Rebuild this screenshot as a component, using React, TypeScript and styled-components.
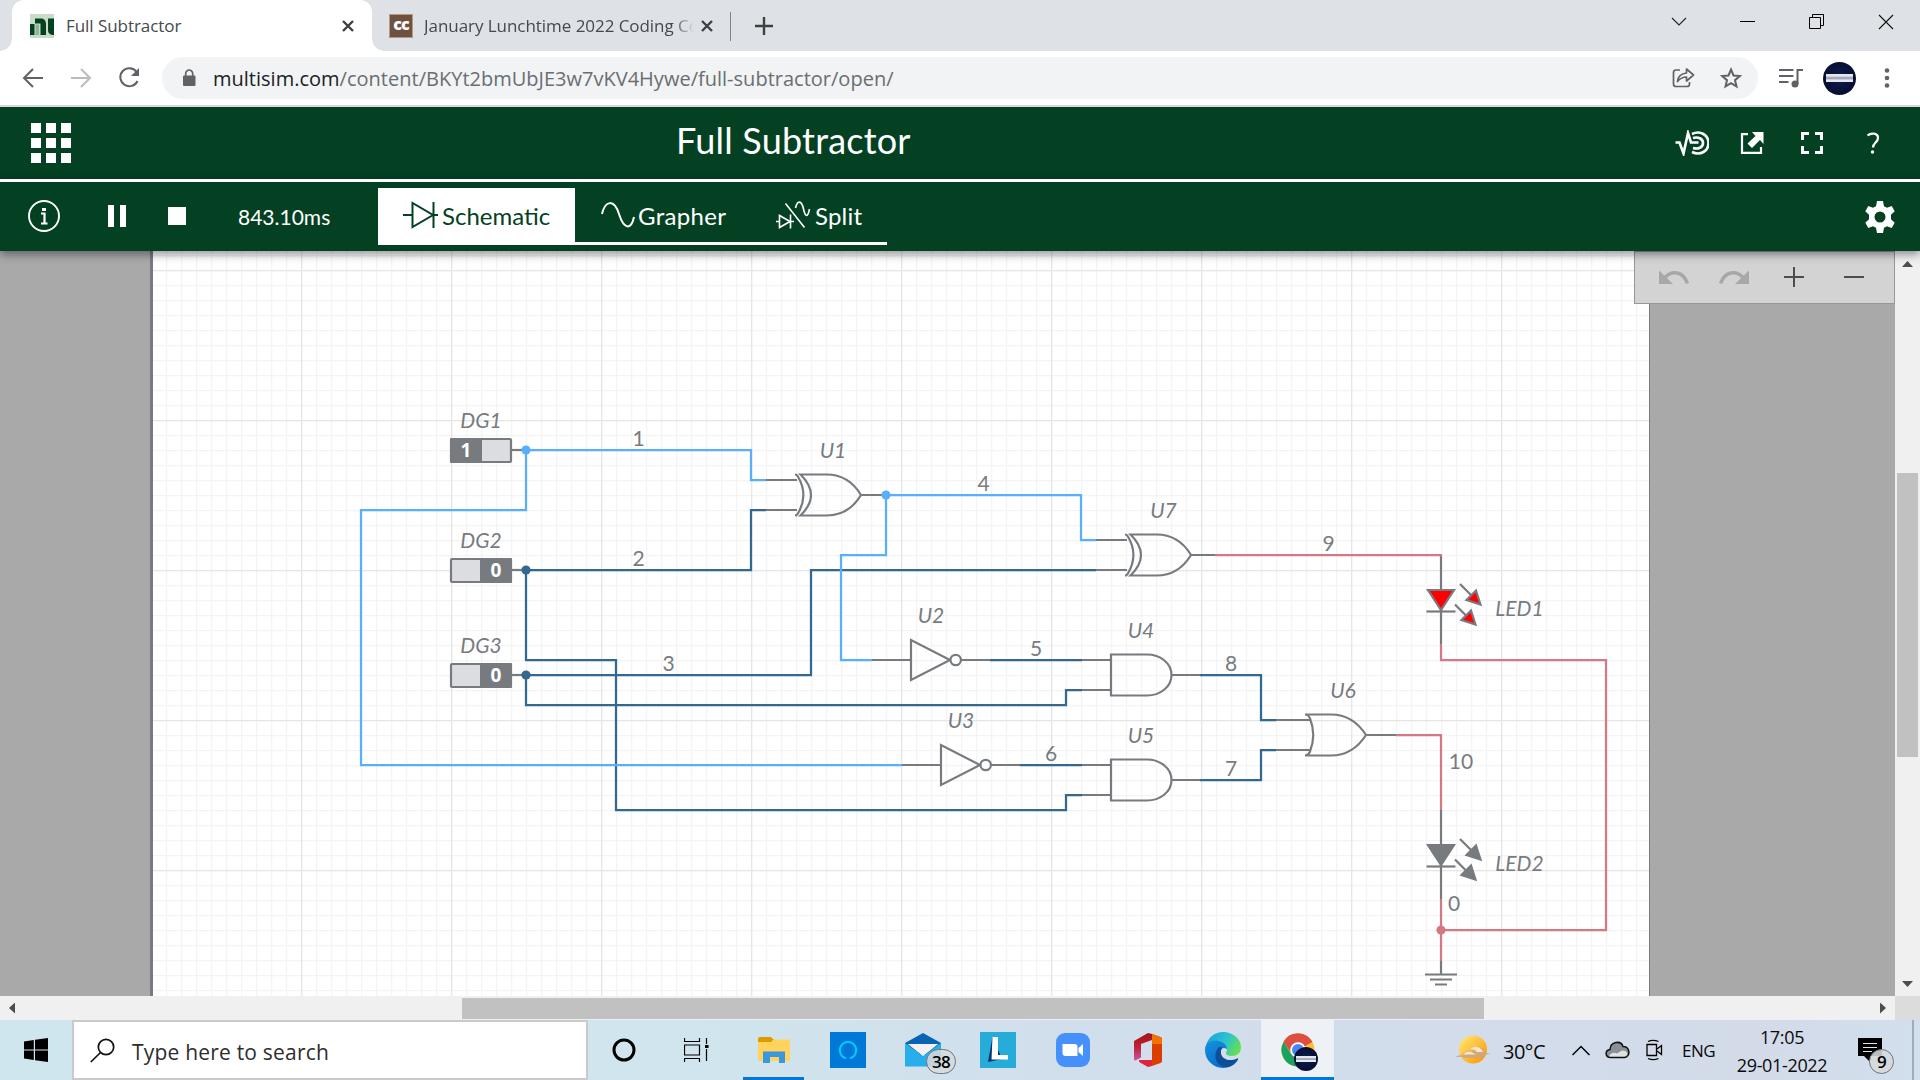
import React from "react";
import styled, { createGlobalStyle, css } from "styled-components";

const UI = `"Open Sans", "Noto Sans", sans-serif`;
const LATO = `Lato, "Open Sans", sans-serif`;
const GREEN = "#044123";
const INK = "#777b80";
const HIGH = "#58b0fc";
const LOW = "#34688f";
const RED = "#d47884";

const Global = createGlobalStyle`
  html, body { margin: 0; padding: 0; overflow: hidden; background: #fff; }
  *, *::before, *::after { box-sizing: border-box; }
  svg { display: block; flex: none; }
`;

const Screen = styled.div`
  width: 1920px;
  height: 1080px;
  display: flex;
  flex-direction: column;
  overflow: hidden;
  font-family: ${UI};
`;

/* ---------- browser chrome ---------- */

const TabStrip = styled.div`
  display: flex;
  height: 51px;
  flex: none;
  background: #dee1e6;
  padding-left: 12px;
`;

const Tab = styled.div<{ $active?: boolean; $width: number; $padLeft: number; $padRight: number }>`
  position: relative;
  display: flex;
  align-items: center;
  width: ${(p) => p.$width}px;
  height: 51px;
  padding: 0 ${(p) => p.$padRight}px 0 ${(p) => p.$padLeft}px;
  ${(p) =>
    p.$active &&
    css`
      background: #fff;
      border-radius: 12px 12px 0 0;
      &::before,
      &::after {
        content: "";
        position: absolute;
        bottom: 0;
        width: 12px;
        height: 12px;
      }
      &::before {
        left: -12px;
        background: radial-gradient(circle at 0 0, transparent 11.5px, #fff 12px);
      }
      &::after {
        right: -12px;
        background: radial-gradient(circle at 100% 0, transparent 11.5px, #fff 12px);
      }
    `}
`;

const TabTitle = styled.span<{ $fade?: boolean }>`
  flex: 1;
  margin-left: 12px;
  overflow: hidden;
  white-space: nowrap;
  font-size: 17px;
  line-height: 26px;
  letter-spacing: -0.05px;
  color: #45494d;
  ${(p) =>
    p.$fade &&
    css`
      margin-left: 11px;
      mask-image: linear-gradient(to right, #000 90%, transparent 97.5%);
    `}
`;

const CcIcon = styled.span`
  width: 24px;
  height: 24px;
  flex: none;
  background: #6f5140;
  border: 1px solid #b39a86;
  color: #fff;
  font: 800 16px/19px ${UI};
  letter-spacing: -0.8px;
  text-align: center;
`;

const TabDivider = styled.span`
  width: 1px;
  height: 29px;
  margin: 12px 24px 0 8px;
  background: #808489;
`;

const NewTab = styled.span`
  display: flex;
  align-items: center;
`;

const WindowButtons = styled.div`
  display: flex;
  margin-left: auto;
  height: 43px;
`;

const WindowButton = styled.span`
  width: 69px;
  display: flex;
  align-items: center;
  justify-content: center;
`;

const AddressBar = styled.div`
  display: flex;
  align-items: center;
  height: 56px;
  flex: none;
  background: #fff;
  border-bottom: 2px solid #d9dadb;
  padding-left: 21px;
`;

const NavIcons = styled.div`
  display: flex;
  gap: 24px;
  width: 141px;
`;

const UrlPill = styled.div`
  display: flex;
  align-items: center;
  width: 1596px;
  height: 42px;
  border-radius: 21px;
  background: #f1f3f4;
  padding: 0 15px 0 20px;
`;

const Url = styled.span`
  margin: 1px 0 0 17px;
  font-size: 20px;
  letter-spacing: 0.01px;
  line-height: 30px;
  color: #6a6e72;
  b {
    font-weight: 400;
    color: #202124;
  }
`;

const PillActions = styled.div`
  display: flex;
  align-items: center;
  gap: 24px;
  margin-left: auto;
`;

const BarActions = styled.div`
  display: flex;
  align-items: center;
  padding-left: 21px;
`;

const Avatar = styled.span<{ $size: number }>`
  display: flex;
  align-items: center;
  justify-content: center;
  width: ${(p) => p.$size}px;
  height: ${(p) => p.$size}px;
  border-radius: 50%;
  background: radial-gradient(circle, #0c1f52 0%, #071039 55%, #060b28 100%);
  &::after {
    content: "";
    width: 82%;
    height: 24%;
    background: linear-gradient(#e4e6ee 25%, #a3a7b8 45%, #a3a7b8 60%, #e8eaf2 75%);
  }
`;

const ProfileButton = styled.span`
  margin: 0 28px 0 19px;
`;

/* ---------- application header ---------- */

const AppHeader = styled.header`
  display: flex;
  align-items: center;
  justify-content: space-between;
  height: 72px;
  flex: none;
  padding: 0 40px 0 31px;
  background: ${GREEN};
  color: #fff;
`;

const AppsGrid = styled.div`
  display: grid;
  grid-template-columns: repeat(3, 10px);
  gap: 5px;
  width: 270px;
  i {
    height: 10px;
    background: #fff;
  }
`;

const Title = styled.h1`
  margin: 0 auto 6px 375px;
  font: 400 36px/44px ${LATO};
  letter-spacing: 0.2px;
`;

const HeaderActions = styled.div`
  display: flex;
  align-items: center;
`;

const HeaderAction = styled.span`
  width: 60px;
  display: flex;
  justify-content: center;
  &:last-child {
    width: 14px;
    margin-left: 24px;
  }
`;

const SimBar = styled.div`
  position: relative;
  z-index: 2;
  display: flex;
  height: 72px;
  flex: none;
  border-top: 3px solid #fff;
  background: ${GREEN};
  color: #fff;
  box-shadow: 0 3px 9px rgba(0, 0, 0, 0.45);
  padding: 0 25px 0 28px;
`;

const Transport = styled.div`
  display: flex;
  align-items: center;
  width: 350px;
  padding-bottom: 1px;
`;

const Pause = styled.span`
  width: 18px;
  height: 22px;
  margin-left: 48px;
  border: solid #fff;
  border-width: 0 6px;
`;

const Stop = styled.span`
  width: 18px;
  height: 18px;
  margin-left: 42px;
  background: #fff;
`;

const Elapsed = styled.span`
  margin: 2px 0 0 52px;
  font: 400 21px/30px ${LATO};
`;

const Views = styled.div`
  display: flex;
  height: 57px;
  margin-top: 6px;
`;

const View = styled.div<{ $active?: boolean; $width: number; $pad: number; $spacing?: number }>`
  display: flex;
  align-items: center;
  width: ${(p) => p.$width}px;
  padding: 0 0 0 ${(p) => p.$pad}px;
  font: 400 24px/30px ${LATO};
  letter-spacing: ${(p) => p.$spacing ?? 0}px;
  white-space: nowrap;
  background: ${(p) => (p.$active ? "#fff" : "transparent")};
  color: ${(p) => (p.$active ? GREEN : "#fff")};
  border-bottom: 3px solid #fff;
  span {
    margin-top: 2px;
  }
`;

const Settings = styled.span`
  display: flex;
  align-items: center;
  margin-left: auto;
`;

/* ---------- workspace ---------- */

const Workspace = styled.main`
  display: flex;
  height: 745px;
  flex: none;
`;

const Canvas = styled.div`
  position: relative;
  display: flex;
  width: 1895px;
  padding-left: 150px;
  background: #a9a9a9;
`;

const Sheet = styled.div`
  width: 1500px;
  background: #fff;
  border-left: 3px solid #777a80;
  border-right: 1px solid #777a80;
  overflow: hidden;
`;

const EditTools = styled.div`
  position: absolute;
  top: 0;
  right: 0;
  display: flex;
  align-items: center;
  width: 261px;
  height: 53px;
  padding: 0 0 2px 9px;
  background: #d3d3d3;
  border: 1px solid #979797;
`;

const EditTool = styled.span`
  width: 60px;
  display: flex;
  justify-content: center;
`;

const VScroll = styled.div`
  display: flex;
  flex-direction: column;
  align-items: center;
  justify-content: space-between;
  width: 25px;
  padding: 10px 0 9px;
  background: #f0f0f0;
`;

const VThumb = styled.div`
  width: 21px;
  height: 284px;
  margin-bottom: 18px;
  background: #c1c1c1;
`;

const HScroll = styled.div`
  display: flex;
  align-items: center;
  justify-content: space-between;
  height: 24px;
  flex: none;
  padding: 0 34px 0 9px;
  background: linear-gradient(to right, #f0f0f0 1895px, #dcdcdc 1895px);
`;

const HThumb = styled.div`
  width: 1022px;
  height: 21px;
  margin-left: 50px;
  background: #c1c1c1;
`;

const Arrow = styled.span<{ $dir: "up" | "down" | "left" | "right" }>`
  width: ${(p) => (p.$dir === "up" || p.$dir === "down" ? 11 : 6)}px;
  height: ${(p) => (p.$dir === "up" || p.$dir === "down" ? 6 : 11)}px;
  background: #4d4d4d;
  clip-path: ${(p) =>
    ({
      up: "polygon(50% 0, 100% 100%, 0 100%)",
      down: "polygon(0 0, 100% 0, 50% 100%)",
      left: "polygon(100% 0, 100% 100%, 0 50%)",
      right: "polygon(0 0, 100% 50%, 0 100%)",
    })[p.$dir]};
`;

/* ---------- taskbar ---------- */

const Taskbar = styled.footer`
  display: flex;
  height: 60px;
  flex: none;
  background: linear-gradient(to right, #cfe6ee 0%, #d0e5ed 36%, #d1dfec 55%, #d2dcea 75%, #d3dbe9 92%, #d2dfec 100%);
`;

const Start = styled.div`
  width: 72px;
  display: flex;
  align-items: center;
  justify-content: center;
`;

const SearchBox = styled.div`
  display: flex;
  align-items: center;
  width: 516px;
  border: 2px solid #cacaca;
  background: #fff;
  padding-left: 16px;
  color: #2d2d2d;
  font-size: 21px;
  letter-spacing: 0.2px;
  span {
    margin: 3px 0 0 17px;
  }
`;

const TaskCell = styled.div<{ $width?: number; $nudge?: number; $open?: boolean; $focus?: boolean }>`
  position: relative;
  width: ${(p) => p.$width ?? 75}px;
  display: flex;
  align-items: center;
  justify-content: center;
  padding-right: ${(p) => p.$nudge ?? 0}px;
  background: ${(p) => (p.$focus ? "#eef2f7" : "transparent")};
  &::after {
    content: "";
    position: absolute;
    bottom: 0;
    left: ${(p) => (p.$focus ? 0 : 7)}px;
    right: ${(p) => (p.$focus ? 0 : 7)}px;
    height: ${(p) => (p.$open || p.$focus ? 3 : 0)}px;
    background: #0078d7;
  }
`;

const Badge = styled.span<{ $width: number; $right: number; $bottom: number }>`
  position: absolute;
  right: ${(p) => p.$right}px;
  bottom: ${(p) => p.$bottom}px;
  width: ${(p) => p.$width}px;
  height: 25px;
  border-radius: 13px;
  border: 1px solid #70757a;
  background: rgba(214, 217, 220, 0.88);
  color: #000;
  font: 600 17px/23px ${UI};
  letter-spacing: -0.6px;
  text-align: center;
`;

const AvatarBadge = styled.span`
  position: absolute;
  left: 33px;
  top: 27px;
`;

const Tray = styled.div`
  display: flex;
  align-items: center;
  margin-left: auto;
  color: #0a0a0a;
  font-size: 19px;
`;

const Temperature = styled.span`
  width: 45px;
  margin: 3px 24px 0 13px;
  white-space: nowrap;
  font-size: 20px;
  letter-spacing: -0.5px;
`;

const Language = styled.span`
  width: 35px;
  margin: 0 0 0 19px;
  font-size: 17px;
  letter-spacing: -0.5px;
`;

const Clock = styled.div`
  display: flex;
  flex-direction: column;
  align-items: center;
  width: 98px;
  margin: 1px 0 0 16px;
  white-space: nowrap;
  font-size: 18px;
  line-height: 28px;
  letter-spacing: -0.35px;
`;

const Notifications = styled.div`
  position: relative;
  width: 54px;
  height: 60px;
  margin-left: 27px;
  padding-top: 18px;
`;

const ShowDesktop = styled.div`
  width: 8px;
  height: 60px;
  border-left: 2px solid #a4abb8;
`;

const CloudIcon = styled.svg`
  margin: 0 16px 0 15px;
`;

/* ---------- schematic primitives ---------- */

const Drawing = styled.svg`
  fill: none;
  stroke: ${INK};
  stroke-width: 2.2;
`;

const NetLabel = styled.text`
  fill: ${INK};
  stroke: none;
  font: 400 21px ${LATO};
  text-anchor: middle;
`;

const PartLabel = styled(NetLabel)`
  font-style: italic;
`;

const SwitchDigit = styled(NetLabel)`
  fill: #fff;
  font: 700 19px ${UI};
`;

const Wire = ({ d, color }: { d: string; color: string }) => <path d={d} stroke={color} strokeWidth={2.25} />;

const Dot = ({ x, y, color }: { x: number; y: number; color: string }) => (
  <circle cx={x} cy={y} r={4.6} fill={color} stroke="none" />
);

const XorGate = ({ x, y }: { x: number; y: number }) => (
  <g transform={`translate(${x} ${y})`}>
    <path d="M-95-15h31M-95 15h31M0 0h25" />
    <path d="M-66-20.500c1.500 0 2.500 1 3.200 2.500q10.400 18 0 36c-.7 1.500-1.700 2.500-3.200 2.500" />
    <path d="M-60.500-20.500q21 20.500 0 41h26c15 0 27-8 34.500-20.500c-7.500-12.500-19.500-20.500-34.500-20.500z" />
  </g>
);

const OrGate = ({ x, y }: { x: number; y: number }) => (
  <g transform={`translate(${x} ${y})`}>
    <path d="M-90-15h34M-90 15h34M0 0h30" />
    <path d="M-61-20.500h26c15 0 27 8 35 20.500c-8 12.500-20 20.500-35 20.500h-26c2.500 0 4-1.500 5-4q6.500-16.500 0-33c-1-2.500-2.500-4-5-4" />
  </g>
);

const AndGate = ({ y }: { y: number }) => (
  <g transform={`translate(1111 ${y})`}>
    <path d="M-30-15h30M-30 15h30M60.500 0h29.500" />
    <path d="M0-20.500h36c13 0 24.500 8.500 24.500 20.500s-11.500 20.500-24.500 20.500h-36z" />
  </g>
);

const Inverter = ({ x, y }: { x: number; y: number }) => (
  <g transform={`translate(${x} ${y})`}>
    <path d="M-40 0h40M50 0h30" />
    <path d="M0-20v40l39-20z" />
    <circle cx="44.700" cy="0" r="5.200" fill="#fff" />
  </g>
);

const Led = ({ y, lit }: { y: number; lit: string }) => (
  <g transform={`translate(1441 ${y})`}>
    <path d="M0-35v89" />
    <path d="M-13 0h26l-13 20z" fill={lit} />
    <path d="M-14.500 21.500h29" />
    <path d="M19-6l11 11M14 14.500l11 11" />
    <path d="M35 0.500l4.500 14l-14-4.500z" fill={lit} />
    <path d="M30 20.500l4.500 14l-14-4.500z" fill={lit} />
  </g>
);

const DigitalSwitch = ({ y, value, name }: { y: number; value: 0 | 1; name: string }) => (
  <g>
    <path d={`M512 ${y}h14`} />
    <rect x="451" y={y - 11} width="60" height="23" rx="1" fill="#dcdde0" />
    <rect x={value ? 450 : 480} y={y - 12} width="32" height="25" rx="1" fill={INK} stroke="none" />
    <SwitchDigit x={value ? 466 : 496} y={y + 7}>
      {value}
    </SwitchDigit>
    <PartLabel x="481" y={y - 22.500}>
      {name}
    </PartLabel>
  </g>
);

const nets = [
  { n: "1", x: 638.5, y: 446 },
  { n: "2", x: 638.5, y: 566 },
  { n: "3", x: 668.5, y: 671 },
  { n: "4", x: 983.5, y: 491 },
  { n: "5", x: 1036, y: 656 },
  { n: "6", x: 1051, y: 761 },
  { n: "7", x: 1231, y: 776 },
  { n: "8", x: 1231, y: 671 },
  { n: "9", x: 1328.5, y: 551 },
  { n: "10", x: 1461, y: 769 },
  { n: "0", x: 1454, y: 911 },
];

const parts = [
  { n: "U1", x: 833, y: 457.5 },
  { n: "U7", x: 1163.5, y: 517.5 },
  { n: "U2", x: 931, y: 622.5 },
  { n: "U3", x: 961, y: 727.5 },
  { n: "U4", x: 1141, y: 637.5 },
  { n: "U5", x: 1141, y: 742.5 },
  { n: "U6", x: 1343, y: 697.5 },
  { n: "LED1", x: 1519.5, y: 615.5 },
  { n: "LED2", x: 1519.5, y: 870.5 },
];

const Schematic = () => (
  <Drawing width="1496" height="745" viewBox="153 251 1496 745">
    <defs>
      <pattern id="minor" x="1" y="0" width="15" height="15" patternUnits="userSpaceOnUse">
        <path d="M.5 0v15M0 .5h15" stroke="#f4f4f4" strokeWidth="1.500" />
      </pattern>
      <pattern id="major" x="1" y="120" width="150" height="150" patternUnits="userSpaceOnUse">
        <path d="M.5 0v150M0 .5h150" stroke="#e6e6e6" strokeWidth="1.600" />
      </pattern>
    </defs>
    <rect x="153" y="251" width="1496" height="745" fill="url(#minor)" stroke="none" />
    <rect x="153" y="251" width="1496" height="745" fill="url(#major)" stroke="none" />

    <XorGate x={861} y={495} />
    <XorGate x={1191} y={555} />
    <AndGate y={675} />
    <AndGate y={780} />
    <OrGate x={1366} y={735} />
    <Inverter x={911} y={660} />
    <Inverter x={941} y={765} />
    <Led y={590} lit="#ff0000" />
    <Led y={845} lit={INK} />

    <Wire color={LOW} d="M526 570H751V510H766M526 570V660H616V810H1066V795H1082" />
    <Wire color={LOW} d="M526 675H811V570H1096M526 675V705H1066V690H1082" />
    <Wire color={LOW} d="M990 660H1082M1020 765H1082" />
    <Wire color={LOW} d="M1200 675H1261V720H1276M1200 780H1261V750H1276" />
    <Wire color={HIGH} d="M526 450H751V480H766M526 450V510H361V765H902" />
    <Wire color={HIGH} d="M886 495H1081V540H1096M886 495V555H841V660H872" />
    <Wire color={RED} d="M1215 555H1442M1441 644V660H1606V930H1441M1396 735H1441V810M1441 899V961" />

    <DigitalSwitch y={450} value={1} name="DG1" />
    <DigitalSwitch y={570} value={0} name="DG2" />
    <DigitalSwitch y={675} value={0} name="DG3" />
    <Dot x={526} y={450} color={HIGH} />
    <Dot x={526} y={570} color={LOW} />
    <Dot x={526} y={675} color={LOW} />
    <Dot x={886} y={495} color={HIGH} />
    <Dot x={1441} y={930} color={RED} />
    <path d="M1441 961v13.500M1425 974.500h32M1430 979.500h22M1435 984.500h12" />

    {nets.map((l) => (
      <NetLabel key={l.n} x={l.x} y={l.y}>
        {l.n}
      </NetLabel>
    ))}
    {parts.map((l) => (
      <PartLabel key={l.n} x={l.x} y={l.y}>
        {l.n}
      </PartLabel>
    ))}
  </Drawing>
);

/* ---------- icons ---------- */

const Cross = ({ size, w, color }: { size: number; w: number; color: string }) => (
  <svg width={size} height={size} viewBox={`0 0 ${size} ${size}`} stroke={color} strokeWidth={w}>
    <path d={`M1 1L${size - 1} ${size - 1}M${size - 1} 1L1 ${size - 1}`} />
  </svg>
);

const NiIcon = () => (
  <svg width="24" height="24" viewBox="0 0 24 24">
    <path fill="#c9dcc6" d="M0 0h24v24H0z" />
    <path fill="#044123" d="M0 10h4.500v11H0zM5 4.500h5.500c3.500 0 5.500 2 5.500 5.500v11h-5.500V9.500H5zM18 4.500h6V21c-4 0-6-1.500-6-5z" />
    <path fill="#8db398" d="M5.500 10.500h3.500v10.500H5.500z" />
  </svg>
);

const Gear = () => (
  <svg width="30" height="32" viewBox="0 0 30 32" fill="#fff" fillRule="evenodd">
    <path d="M12 0h6l1 5.200 3 1.600 4.700-1.800 3 5.200-3.700 3.600v4.400l3.700 3.600-3 5.200-4.700-1.800-3 1.600-1 5.200h-6l-1-5.200-3-1.600-4.700 1.800-3-5.200 3.700-3.600v-4.400L.3 10.200l3-5.200L8 6.800l3-1.600zM15 10.500a5.500 5.500 0 100 11 5.500 5.500 0 000-11z" />
  </svg>
);

const EditArrow = ({ flip }: { flip?: boolean }) => (
  <svg width="32" height="16" viewBox="0 0 32 16">
    <g transform={flip ? "matrix(-1 0 0 1 32 0)" : undefined}>
      <path d="M1 1.500v13.500h14z" fill="#a8a8a8" />
      <path d="M7 8.500C14 1 25 2 29.500 14.500" fill="none" stroke="#a8a8a8" strokeWidth="3.600" />
    </g>
  </svg>
);

const ChromeLogo = () => (
  <svg width="34" height="34" viewBox="0 0 34 34">
    <circle cx="17" cy="17" r="16.500" fill="#fbc02d" />
    <path d="M17 17L2.700 8.700A16.500 16.500 0 0131.300 9z" fill="#dd4f43" />
    <path d="M17 9h14.300A16.500 16.500 0 002.700 8.700L10 20z" fill="#dd4f43" />
    <path d="M2.700 8.700A16.500 16.500 0 0017 33.500L24 21l-14 0z" fill="#1ba261" />
    <circle cx="17" cy="17" r="7.800" fill="#fff" />
    <circle cx="17" cy="17" r="6" fill="#4687f4" />
  </svg>
);

const EdgeLogo = () => (
  <svg width="36" height="36" viewBox="0 0 36 36">
    <defs>
      <linearGradient id="edgeTop" x1="0" x2="1" y1="0.200" y2="0.600">
        <stop offset="0" stopColor="#1ba5dc" />
        <stop offset="0.550" stopColor="#2cc3d0" />
        <stop offset="1" stopColor="#66e14b" />
      </linearGradient>
      <linearGradient id="edgeLeft" x1="0" x2="0.500" y1="0" y2="1">
        <stop offset="0" stopColor="#1693dc" />
        <stop offset="1" stopColor="#0670cc" />
      </linearGradient>
    </defs>
    <path d="M1 14C3 5 10 0 18 0c10 0 18 7 18 15 0 6-4 9-9 9-4 0-6-1-6-3 0-1 1-2 1-4 0-5-6-8-12-8-4 0-7 2-9 5z" fill="url(#edgeTop)" />
    <path d="M0 18c0-6 4-9.500 10-9.500 7 0 12 4 12 8.500-5-3-9 1-9 6 0 6 4 11 9 12.500C10 38 0 29 0 18z" fill="url(#edgeLeft)" />
    <path d="M14 15c-6 6-5 19 8 20.500 5-1 9-4 11-8 .5-1-.5-1.500-1-1-7 3.500-15 1-16-5-.4-3 .5-5 2-6z" fill="#0c4f98" />
  </svg>
);

export default function App() {
  return (
    <Screen>
      <Global />
      <TabStrip>
        <Tab $active $width={360} $padLeft={18} $padRight={18}>
          <NiIcon />
          <TabTitle>Full Subtractor</TabTitle>
          <Cross size={12} w={2.4} color="#3c4043" />
        </Tab>
        <Tab $width={350} $padLeft={17} $padRight={9}>
          <CcIcon>cc</CcIcon>
          <TabTitle $fade>January Lunchtime 2022 Coding Contest</TabTitle>
          <Cross size={12} w={2.4} color="#3c4043" />
        </Tab>
        <TabDivider />
        <NewTab>
          <svg width="18" height="18" viewBox="0 0 18 18" stroke="#3c4043" strokeWidth="2.400">
            <path d="M9 0v18M0 9h18" />
          </svg>
        </NewTab>
        <WindowButtons>
          <WindowButton>
            <svg width="16" height="10" viewBox="0 0 16 10" fill="none" stroke="#222" strokeWidth="1.100">
              <path d="M1 1l7 7 7-7" />
            </svg>
          </WindowButton>
          <WindowButton>
            <svg width="15" height="1" viewBox="0 0 15 1">
              <path d="M0 0h15v1H0z" />
            </svg>
          </WindowButton>
          <WindowButton>
            <svg width="15" height="15" viewBox="0 0 15 15" fill="none" stroke="#000">
              <path d="M.5 3.500h11v11H.5zM3.500 3.500v-3h11v11h-3" />
            </svg>
          </WindowButton>
          <WindowButton>
            <Cross size={16} w={1.1} color="#111" />
          </WindowButton>
        </WindowButtons>
      </TabStrip>

      <AddressBar>
        <NavIcons>
          <svg width="24" height="24" viewBox="0 0 24 24" fill="none" stroke="#5f6368" strokeWidth="2">
            <path d="M22 12H4M12 3l-9 9 9 9" />
          </svg>
          <svg width="24" height="24" viewBox="0 0 24 24" fill="none" stroke="#b9bbbe" strokeWidth="2">
            <path d="M2 12h18M12 3l9 9-9 9" />
          </svg>
          <svg width="24" height="24" viewBox="0 0 24 24" fill="none" stroke="#5f6368" strokeWidth="2">
            <path d="M19.500 5.800A9 9 0 1020.500 15" />
            <path d="M22 2v8h-8z" fill="#5f6368" stroke="none" />
          </svg>
        </NavIcons>
        <UrlPill>
          <svg width="14" height="18" viewBox="0 0 14 18">
            <rect x="1" y="6.500" width="12.500" height="10.500" rx="1" fill="#5f6368" />
            <path d="M3.700 7V4.500a3.500 3.500 0 017 0V7" fill="none" stroke="#5f6368" strokeWidth="1.700" />
          </svg>
          <Url>
            <b>multisim.com</b>/content/BKYt2bmUbJE3w7vKV4Hywe/full-subtractor/open/
          </Url>
          <PillActions>
            <svg width="24" height="24" viewBox="0 0 24 24" fill="none" stroke="#5f6368" strokeWidth="1.700">
              <path d="M9 4H5C3.500 4 2.500 5 2.500 6.500V18c0 1.500 1 2.500 2.500 2.500h11c1.500 0 2.500-1 2.500-2.500v-2" />
              <path d="M6.500 15.500c.5-5 3.500-8 9-8.500V3L22.500 9l-7 6v-4c-4 0-6.500 1.500-9 4.500z" strokeLinejoin="round" />
            </svg>
            <svg width="24" height="24" viewBox="0 0 24 24" fill="none" stroke="#5f6368" strokeWidth="2">
              <path d="M12 3.500l2.500 6 6.300.5-4.800 4.200 1.500 6.200-5.500-3.300-5.500 3.300L8 14.200 3.200 10l6.300-.5z" />
            </svg>
          </PillActions>
        </UrlPill>
        <BarActions>
          <svg width="25" height="20" viewBox="0 0 25 20" stroke="#5f6368" strokeWidth="2">
            <path d="M0 2h14.500M0 8h14.500M0 14h9.500M24 2h-5.500v14" fill="none" />
            <circle cx="16" cy="16" r="3.500" fill="#5f6368" stroke="none" />
          </svg>
          <ProfileButton>
            <Avatar $size={33} />
          </ProfileButton>
          <svg width="6" height="20" viewBox="0 0 6 20" fill="#5f6368">
            <circle cx="3" cy="2.500" r="2.300" />
            <circle cx="3" cy="10" r="2.300" />
            <circle cx="3" cy="17.500" r="2.300" />
          </svg>
        </BarActions>
      </AddressBar>

      <AppHeader>
        <AppsGrid>
          {Array.from({ length: 9 }, (_, i) => (
            <i key={i} />
          ))}
        </AppsGrid>
        <Title>Full Subtractor</Title>
        <HeaderActions>
          <HeaderAction>
            <svg width="34" height="26" viewBox="-0.500 0 34 26" fill="none" stroke="#fff" strokeWidth="2.600">
              <path d="M0 12.500h4L8 23.500 12.500 3l3 9.500h7.500" />
              <path d="M16.500 4C25 0 33 5 33 13s-8 13-16.500 9" />
              <path d="M17.500 8c5-1.500 10 .5 10 5s-5 6.500-10 5" />
            </svg>
          </HeaderAction>
          <HeaderAction>
            <svg width="24" height="24" viewBox="0 0 24 24">
              <path d="M8 3.200H2v18.600h19V16" fill="none" stroke="#fff" strokeWidth="2.200" />
              <path d="M12 1h11.500v12l-3.500-4-8 8-4.500-4.500 8-7.500z" fill="#fff" />
            </svg>
          </HeaderAction>
          <HeaderAction>
            <svg width="22" height="22" viewBox="0 0 22 22" fill="none" stroke="#fff" strokeWidth="3">
              <path d="M1.500 8V1.500H8M14 1.500h6.500V8M20.500 14v6.500H14M8 20.500H1.500V14" />
            </svg>
          </HeaderAction>
          <HeaderAction>
            <svg width="14" height="22" viewBox="0 0 14 22" fill="none" stroke="#fff" strokeWidth="2.300">
              <path d="M1.500 3.500C5 .5 12 .8 12 6c0 4.500-5 4.500-5 9.500" />
              <circle cx="6.500" cy="20" r="1.700" fill="#fff" stroke="none" />
            </svg>
          </HeaderAction>
        </HeaderActions>
      </AppHeader>

      <SimBar>
        <Transport>
          <svg width="32" height="32" viewBox="0 0 32 32" fill="none" stroke="#fff">
            <circle cx="16" cy="16" r="15" strokeWidth="1.900" />
            <path d="M13 13.500h3.500v9.500M13 23.500h6.500" strokeWidth="2.200" />
            <path d="M14 8h4v3h-4z" fill="#fff" stroke="none" />
          </svg>
          <Pause />
          <Stop />
          <Elapsed>843.10ms</Elapsed>
        </Transport>
        <Views>
          <View $active $width={197} $pad={25}>
            <svg width="39" height="28" viewBox="0 0 39 28" fill="none" stroke={GREEN} strokeWidth="2">
              <path d="M0 14h9M31 14h4M9.500 2v24L30 14zM30.500 1v26" />
            </svg>
            <span>Schematic</span>
          </View>
          <View $width={173} $pad={26} $spacing={0.3}>
            <svg width="37" height="28" viewBox="0 0 37 28" fill="none" stroke="#fff" strokeWidth="2">
              <path d="M1 13C4-.5 13-2.500 18 13s12 16.500 15 3" />
            </svg>
            <span>Grapher</span>
          </View>
          <View $width={139} $pad={28} $spacing={0.2}>
            <svg width="39" height="30" viewBox="0 0 39 30" fill="none" stroke="#fff" strokeWidth="1.600">
              <path d="M0 21.500h3M14 21.500h4M3.500 15.500v12l10.500-6zM14.500 14.500v14M9.500 3.500l19 24M19.500 8c2-8 6-8 8 1s4.500 8 6 0" />
            </svg>
            <span>Split</span>
          </View>
        </Views>
        <Settings>
          <Gear />
        </Settings>
      </SimBar>

      <Workspace>
        <Canvas>
          <Sheet>
            <Schematic />
          </Sheet>
          <EditTools>
            <EditTool>
              <EditArrow />
            </EditTool>
            <EditTool>
              <EditArrow flip />
            </EditTool>
            <EditTool>
              <svg width="20" height="20" viewBox="0 0 20 20" stroke="#4d4d4d" strokeWidth="2">
                <path d="M10 0v20M0 10h20" />
              </svg>
            </EditTool>
            <EditTool>
              <svg width="20" height="20" viewBox="0 0 20 20" stroke="#4d4d4d" strokeWidth="2">
                <path d="M0 10h20" />
              </svg>
            </EditTool>
          </EditTools>
        </Canvas>
        <VScroll>
          <Arrow $dir="up" />
          <VThumb />
          <Arrow $dir="down" />
        </VScroll>
      </Workspace>
      <HScroll>
        <Arrow $dir="left" />
        <HThumb />
        <Arrow $dir="right" />
      </HScroll>

      <Taskbar>
        <Start>
          <svg width="24" height="24" viewBox="0 0 24 24">
            <path d="M0 3.400l9.800-1.400v9.400H0zM11 1.800L24 0v11.400H11zM0 12.600h9.800V22L0 20.600zM11 12.600h13V24l-13-1.800z" />
          </svg>
        </Start>
        <SearchBox>
          <svg width="25" height="25" viewBox="0 0 25 25" fill="none" stroke="#111" strokeWidth="1.700">
            <circle cx="16" cy="9" r="7.700" />
            <path d="M10.500 14.500L.8 24" />
          </svg>
          <span>Type here to search</span>
        </SearchBox>
        <TaskCell $width={72}>
          <svg width="24" height="24" viewBox="0 0 24 24">
            <circle cx="12" cy="12" r="10" fill="none" stroke="#000" strokeWidth="3" />
          </svg>
        </TaskCell>
        <TaskCell $width={76} $nudge={3}>
          <svg width="25" height="24" viewBox="0 0 25 24" fill="none" stroke="#000" strokeWidth="1.200">
            <path d="M.5 0v3.500h15V0M.5 7h15v10H.5zM.5 24v-3.500h15V24M22.500 0v6M22.500 11v12" />
            <path d="M21 7h3.500v3H21z" fill="#000" stroke="none" />
          </svg>
        </TaskCell>
        <TaskCell $open>
          <svg width="32" height="26" viewBox="0 0 32 26">
            <path d="M0 2q0-2 2-2h11l3 3v4H0z" fill="#dd9b00" />
            <path d="M0 5h13l2.500-2.500H32V24H0z" fill="#ffd35c" />
            <path d="M5 14.500h22V26h-6v-6h-9v6H5z" fill="#3a96dd" />
          </svg>
        </TaskCell>
        <TaskCell $nudge={1}>
          <svg width="36" height="36" viewBox="0 0 36 36">
            <path d="M0 0h36v36H0z" fill="#0078d7" />
            <path d="M16 26.200A8.200 8.200 0 1120 26.200" fill="none" stroke="#00caff" strokeWidth="2" />
          </svg>
        </TaskCell>
        <TaskCell $nudge={1}>
          <svg width="36" height="34" viewBox="0 0 36 34">
            <path d="M0 10L18 0l18 10v12H0z" fill="#0964b6" />
            <path d="M3 11h30L18 23z" fill="#f3f2f1" />
            <path d="M0 10l18 13L36 10v23.500H0z" fill="#28aeea" />
            <path d="M3 11h30L18 22.500z" fill="#f3f2f1" />
          </svg>
          <Badge $width={30} $right={5} $bottom={6}>
            38
          </Badge>
        </TaskCell>
        <TaskCell $nudge={1}>
          <svg width="36" height="36" viewBox="0 0 36 36">
            <path d="M0 0h36v36H0z" fill="#27acd9" />
            <path d="M12.500 5L8 30l14-3z" fill="#06346a" />
            <path d="M12.500 5H18v18h10v4.500H11.500z" fill="#fff" />
          </svg>
        </TaskCell>
        <TaskCell $nudge={1}>
          <svg width="34" height="34" viewBox="0 0 34 34">
            <rect width="34" height="34" rx="9" fill="#4690fb" />
            <path d="M6.500 11h12q3 0 3 3v9h-12q-3 0-3-3zM22.500 15l4.500-4v12l-4.500-4z" fill="#fff" />
          </svg>
        </TaskCell>
        <TaskCell $nudge={1}>
          <svg width="28" height="34" viewBox="0 0 28 34">
            <defs>
              <linearGradient id="officeLeft" x1="0" x2="0" y1="0" y2="1">
                <stop offset="0" stopColor="#a3121b" />
                <stop offset="0.500" stopColor="#c01f35" />
                <stop offset="1" stopColor="#c65aa0" />
              </linearGradient>
            </defs>
            <path d="M0 8L14 0l4 1v6L7 11v13.500L1.500 27.500Q0 27.500 0 26z" fill="url(#officeLeft)" />
            <path d="M5 27h13v6l-4 1-8-4.500q-1.500-1.200-1-2.500z" fill="#e0233f" />
            <path d="M18 1l8.500 3q1.500.5 1.500 2v22q0 1.500-1.500 2L18 33z" fill="#dc3e00" />
            <path d="M18 1l8.500 3q1.500.5 1.500 2v5H18z" fill="#ef7400" />
          </svg>
        </TaskCell>
        <TaskCell $nudge={1}>
          <EdgeLogo />
        </TaskCell>
        <TaskCell $focus $width={73}>
          <ChromeLogo />
          <AvatarBadge>
            <Avatar $size={24} />
          </AvatarBadge>
        </TaskCell>
        <Tray>
          <svg width="35" height="30" viewBox="0 0 35 30">
            <defs>
              <linearGradient id="sun" x1="0" x2="1" y1="0" y2="1">
                <stop offset="0.100" stopColor="#ffe36b" />
                <stop offset="0.850" stopColor="#ff9d12" />
              </linearGradient>
            </defs>
            <circle cx="18" cy="14.500" r="14" fill="url(#sun)" />
            <path d="M7 20q4-5 10-4 3-5 9-3 4 1 5 5h4q-3 2-6 2l-1 3H8v-1H0q3-2 7-2z" fill="#c9a684" opacity="0.800" />
            <path d="M8 19.500q5-5 10-1.500l3 1.500zM15 14q7-5 12 1l1 2h-6q-2-3-7-3z" fill="#f6e6d4" />
          </svg>
          <Temperature>30°C</Temperature>
          <svg width="18" height="11" viewBox="0 0 18 11" fill="none" stroke="#000" strokeWidth="1.500">
            <path d="M.5 10L9 1.500 17.500 10" />
          </svg>
          <CloudIcon width="25" height="18" viewBox="0 0 25 18">
            <path d="M6 16.500c-6 0-6.500-7-1-8 .5-8 11-9.500 13-3 7 0 8 10 1.500 11z" fill="#8b9098" stroke="#111" strokeWidth="1.500" />
            <path d="M4 15.500c1-3 5-5 8-3l5-3c5 0 6 3 4.500 5l-2 1z" fill="#e2e2e2" />
          </CloudIcon>
          <svg width="17" height="22" viewBox="0 0 17 22" fill="none" stroke="#000" strokeWidth="1.300">
            <path d="M2 2.500Q7 .2 12.500 2.500M2 19.500q5 2.300 10.500 0M1 5.500h9.500v11H1zM11 10l4.500-3.500v9L11 12" />
          </svg>
          <Language>ENG</Language>
          <Clock>
            <span>17:05</span>
            <span>29-01-2022</span>
          </Clock>
          <Notifications>
            <svg width="25" height="24" viewBox="0 0 25 24">
              <path d="M0 0h24v18H12v6l-6-6H0z" />
              <path d="M5 5.500h14M5 9.500h14M5 13.500h9" stroke="#dfe4ec" strokeWidth="1.200" />
            </svg>
            <Badge $width={25} $right={18} $bottom={6}>
              9
            </Badge>
          </Notifications>
          <ShowDesktop />
        </Tray>
      </Taskbar>
    </Screen>
  );
}
